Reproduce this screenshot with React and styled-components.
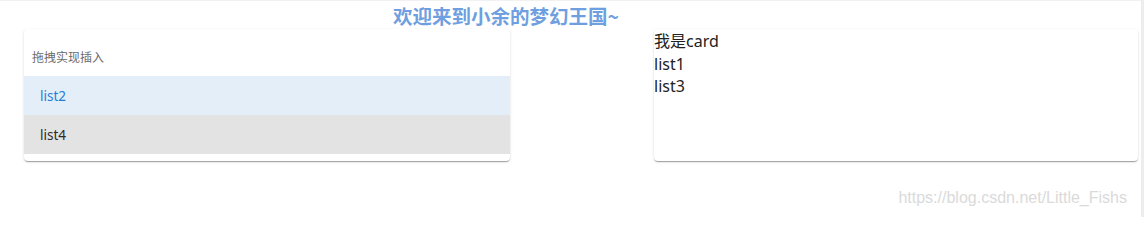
import React from "react";
import styled, { createGlobalStyle } from "styled-components";

const GlobalStyle = createGlobalStyle`
  html, body {
    margin: 0;
    padding: 0;
    background: #fff;
  }
  body {
    font-family: "Noto Sans", "Noto Sans CJK SC", sans-serif;
  }
`;

const leftItems = [
  { name: "list2", active: true },
  { name: "list4", active: false },
];

const rightItems = ["我是card", "list1", "list3"];

const App = () => {
  return (
    <Page>
      <GlobalStyle />
      <Title>欢迎来到小余的梦幻王国~</Title>
      <Board>
        <Card>
          <Subheader>拖拽实现插入</Subheader>
          {leftItems.map((item) => (
            <ListItem key={item.name} active={item.active}>
              {item.name}
            </ListItem>
          ))}
        </Card>
        <Card>
          <PlainBody>
            {rightItems.map((text) => (
              <PlainLine key={text}>{text}</PlainLine>
            ))}
          </PlainBody>
        </Card>
      </Board>
      <Watermark>https://blog.csdn.net/Little_Fishs</Watermark>
    </Page>
  );
};

export default App;

const Page = styled.div`
  position: relative;
  width: 1144px;
  height: 217px;
  box-sizing: border-box;
  border-top: 1px solid #f1f1f1;
  border-right: 3px solid #ededed;
  overflow: hidden;
`;

const Title = styled.h1`
  margin: 0;
  padding: 1px 0 0 393px;
  height: 27px;
  line-height: 27px;
  font-size: 19.5px;
  font-weight: 700;
  color: #6f9fe0;
  font-family: "Noto Sans CJK SC", sans-serif;
`;

const Board = styled.div`
  display: grid;
  grid-template-columns: 486px 484px;
  column-gap: 144px;
  padding-left: 24px;
`;

const Card = styled.div`
  height: 132px;
  box-sizing: border-box;
  padding-bottom: 8px;
  background: #fff;
  border-radius: 4px;
  overflow: hidden;
  box-shadow: 0 2px 1px -1px rgba(0, 0, 0, 0.2), 0 1px 1px 0 rgba(0, 0, 0, 0.14),
    0 1px 3px 0 rgba(0, 0, 0, 0.12);
`;

const Subheader = styled.div`
  height: 47px;
  display: flex;
  align-items: center;
  padding: 8px 0 0 8px;
  box-sizing: border-box;
  font-size: 12px;
  color: #6b6b6b;
  font-family: "Noto Sans CJK SC", sans-serif;
`;

const ListItem = styled.div`
  height: 39px;
  display: flex;
  align-items: center;
  padding-left: 16px;
  font-size: 13.5px;
  background: ${(p) => (p.active ? "#e3eef9" : "#e3e3e3")};
  color: ${(p) => (p.active ? "#1f7fd8" : "#2a2a2a")};
`;

const PlainBody = styled.div`
  padding-top: 1px;
`;

const PlainLine = styled.div`
  font-size: 16px;
  line-height: 22.5px;
  color: #222;
`;

const Watermark = styled.div`
  position: absolute;
  right: 14px;
  top: 188px;
  font-family: "Liberation Sans", Arial, sans-serif;
  font-size: 16px;
  color: #dadada;
`;
